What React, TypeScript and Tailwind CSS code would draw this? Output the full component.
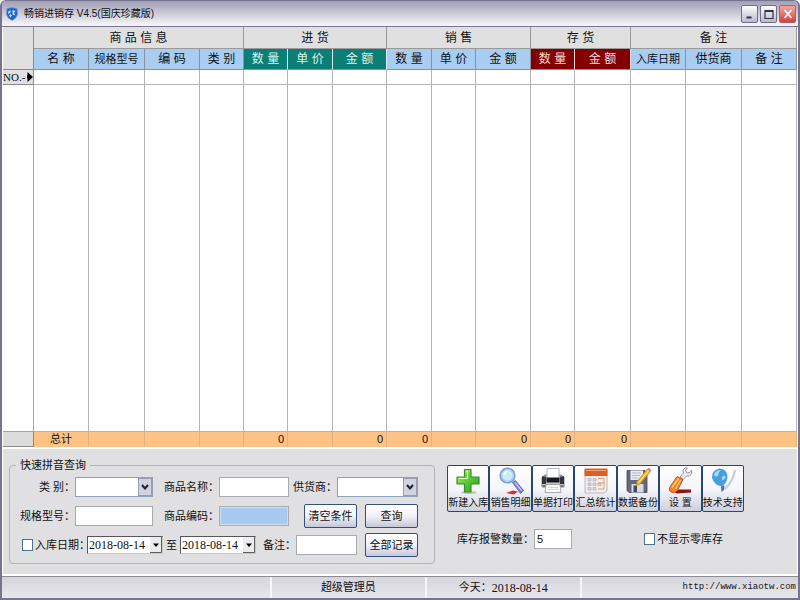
import React, { useState } from 'react';
import clsx from 'clsx';

const COLUMNS = [
  { label: '名 称', width: 55, tone: 'blue', total: '总计' },
  { label: '规格型号', width: 56, tone: 'blue', total: '' },
  { label: '编 码', width: 55, tone: 'blue', total: '' },
  { label: '类 别', width: 44, tone: 'blue', total: '' },
  { label: '数 量', width: 44, tone: 'teal', total: '0' },
  { label: '单 价', width: 45, tone: 'teal', total: '' },
  { label: '金 额', width: 54, tone: 'teal', total: '0' },
  { label: '数 量', width: 45, tone: 'blue', total: '0' },
  { label: '单 价', width: 44, tone: 'blue', total: '' },
  { label: '金 额', width: 55, tone: 'blue', total: '0' },
  { label: '数 量', width: 44, tone: 'red', total: '0' },
  { label: '金 额', width: 56, tone: 'red', total: '0' },
  { label: '入库日期', width: 55, tone: 'blue', total: '' },
  { label: '供货商', width: 56, tone: 'blue', total: '' },
  { label: '备 注', width: 55, tone: 'blue', total: '' },
];

const GROUPS = [
  { label: '商 品 信 息', span: 4 },
  { label: '进 货', span: 3 },
  { label: '销 售', span: 3 },
  { label: '存 货', span: 2 },
  { label: '备 注', span: 3 },
];

const TONES: Record<string, string> = {
  blue: 'bg-[#a9cdf1] text-[#111] border-[#8494a8]',
  teal: 'bg-[#0b7f76] text-[#d8f4f0] border-b-[#8494a8] border-r-[#dfeeee]',
  red: 'bg-[#840000] text-[#f4dcdc] border-b-[#8494a8] border-r-[#e8dcdc]',
};

const TABLE_WIDTH = 794;

const AppLogo = () => (
  <svg viewBox="0 0 12 14" className="h-3.5 w-3">
    <path d="M6 0.5 L11 1.5 L11.5 7 Q11 11 6 13.5 Q1 11 0.5 7 L1 1.5 Z" fill="#1d63c8" stroke="#5b9de8" strokeWidth="0.8" />
    <path d="M2.5 4 L5 3.5 L4 6 L2 7 Z M6.5 3 L9.5 4 L8 6 L9.5 8.5 L6.5 7.5 Z M4.5 7 L6 8.5 L4.5 10.5 L3 8.5 Z" fill="#bfe2ff" />
  </svg>
);

const AddIcon = () => (
  <svg viewBox="0 0 26 28" className="h-7 w-7">
    <defs>
      <linearGradient id="plus" x1="0" y1="0" x2="1" y2="1">
        <stop offset="0" stopColor="#b4ef72" />
        <stop offset="0.5" stopColor="#5cc83a" />
        <stop offset="1" stopColor="#2e9f1e" />
      </linearGradient>
    </defs>
    <ellipse cx="14" cy="25.5" rx="8" ry="1.5" fill="#b9c4b4" />
    <path d="M9.5 2.5 H16 V10 H24 V17 H16 V25 H9.5 V17 H2 V10 H9.5 Z" fill="url(#plus)" stroke="#339127" strokeWidth="1.2" strokeLinejoin="round" />
    <path d="M11 4 H12.5 V11.5 H4" fill="none" stroke="#dcfab8" strokeWidth="1" />
  </svg>
);

const SearchIcon = () => (
  <svg viewBox="0 0 26 28" className="h-7 w-7">
    <path d="M8 26 L15 23.5 L20 24.5 L16 27.5 Z" fill="#c83830" />
    <path d="M14.5 15.5 L17.5 13.5 L25.5 23.5 L22.5 26.5 Z" fill="#8184cf" stroke="#55569d" strokeWidth="0.8" />
    <path d="M17 15.5 L23.5 23.5" stroke="#c5c6f5" strokeWidth="1.2" />
    <circle cx="9.5" cy="8.5" r="7.3" fill="#cfeafb" stroke="#7f9dc4" strokeWidth="1.6" />
    <circle cx="9.5" cy="8.5" r="5.7" fill="none" stroke="#8fcdf2" strokeWidth="1" />
    <path d="M5 7 Q7 3 11 3.5 Q8 5 7 8 Z" fill="#fff" />
  </svg>
);

const PrintIcon = () => (
  <svg viewBox="0 0 26 28" className="h-7 w-7">
    <path d="M2 10 L5 8 H21 L24 10 V20 H2 Z" fill="#c3c6cd" stroke="#686b72" strokeWidth="0.8" />
    <path d="M2 9.5 H6 V17 H2 Z M20 9.5 H24 V17 H20 Z" fill="#33363c" />
    <path d="M7 1.5 H19 V12 H7 Z" fill="#fff" stroke="#a4a8b0" strokeWidth="0.8" />
    <path d="M6.5 10.5 H19.5 V15.5 H6.5 Z" fill="#191b1f" />
    <path d="M3 18 H23 V20 H3 Z" fill="#74777d" />
    <path d="M6 17.5 H20 L21 25.5 H5 Z" fill="#fafafa" stroke="#92959c" strokeWidth="0.8" />
    <path d="M8 20.5 H18 M8 22.5 H18" stroke="#c9cbd0" strokeWidth="0.8" />
  </svg>
);

const CalendarIcon = () => (
  <svg viewBox="0 0 26 28" className="h-7 w-7">
    <path d="M3 3 H25 V24 L22 26 H3 Z" fill="#f3ece9" stroke="#b3aaac" strokeWidth="0.8" />
    <path d="M2.5 1.5 H25.5 V9 H2.5 Z" fill="#dc5f26" />
    <path d="M4 3.5 H24" stroke="#f4a174" strokeWidth="1" />
    <path d="M6 11.5 H9 V14 H6 Z M11 11.5 H14 V14 H11 Z M6 16 H9 V18.5 H6 Z M11 16 H14 V18.5 H11 Z M16 16 H19 V18.5 H16 Z M6 20.5 H9 V23 H6 Z M11 20.5 H14 V23 H11 Z" fill="#dcd9e3" stroke="#a9a4bb" strokeWidth="0.6" />
    <path d="M16 11.5 H22 V22 H16 M16 16 H22" fill="none" stroke="#e89268" strokeWidth="0.9" />
  </svg>
);

const BackupIcon = () => (
  <svg viewBox="0 0 26 28" className="h-7 w-7">
    <path d="M2 3.5 H20 L22 5.5 V25.5 H4 L2 23.5 Z" fill="#65687d" stroke="#45485c" strokeWidth="0.8" />
    <path d="M5.5 3.5 H18 V13 H5.5 Z" fill="#eceef5" />
    <path d="M7 6 H16 M7 8.5 H15 M7 11 H13" stroke="#a7abbc" strokeWidth="0.9" />
    <path d="M6.5 17 H18.5 V25.5 H6.5 Z" fill="#d8dae4" />
    <path d="M8.5 18.5 H12 V25 H8.5 Z" fill="#45485c" />
    <path d="M12 14.5 L22.5 2 L25.5 4.5 L15 17 L11 18.5 Z" fill="#f1bd3b" stroke="#a97a1c" strokeWidth="0.7" />
    <path d="M22.5 2 L23.8 0.8 L26 3 L25.5 4.5 Z" fill="#e56c55" />
    <path d="M14 15 L23.5 3.8" stroke="#ffe899" strokeWidth="0.9" />
  </svg>
);

const SettingsIcon = () => (
  <svg viewBox="0 0 26 28" className="h-7 w-7">
    <path d="M7 25 L12 22.5 H24 V25.5 L10 26.5 Z" fill="#8b1712" />
    <path d="M13 10 L16.5 6 Q14.5 2.5 18 1 L20.5 0.8 L18.5 3.5 L20 6 L23 5.5 L24.5 3 Q26 7 22.5 9 L19.5 9 L16 12.5 Z" fill="#e9ebef" stroke="#8b8e98" strokeWidth="0.9" />
    <path d="M2.5 20.5 L10 9.5 L16 12.5 L11 22.5 Q8.5 26.5 5 25.5 Q1 24 2.5 20.5 Z" fill="#ee8726" stroke="#b75113" strokeWidth="0.9" />
    <path d="M5 20.5 L11.5 11.5 M8.5 22 L13.5 13" stroke="#ffc884" strokeWidth="1.3" />
  </svg>
);

const SupportIcon = () => (
  <svg viewBox="0 0 26 28" className="h-7 w-7">
    <path d="M25 3 Q23 14 15 22" fill="none" stroke="#c9ced8" strokeWidth="2.4" />
    <path d="M23 2 Q21.5 12 15 19" fill="none" stroke="#fff" strokeWidth="1.2" />
    <path d="M9.5 1.5 Q17.5 2 17.5 10 Q17 16 12 19.5 Q4 18 2 11 Q1.5 3 9.5 1.5 Z" fill="#459fe2" />
    <path d="M4 8 Q6 2.5 11 3.5 Q8 5 8.5 8 Q6 11 4 8 Z M12 10 Q14 7 16 10 Q14 14 12 13 Z" fill="#a6dcf9" />
    <path d="M11 19.5 L14.5 18.5 L14 23 L11.5 25 Z" fill="#3f73b4" />
  </svg>
);

const TOOLS = [
  { label: '新建入库', icon: AddIcon },
  { label: '销售明细', icon: SearchIcon },
  { label: '单据打印', icon: PrintIcon },
  { label: '汇总统计', icon: CalendarIcon },
  { label: '数据备份', icon: BackupIcon },
  { label: '设 置', icon: SettingsIcon },
  { label: '技术支持', icon: SupportIcon },
];

const inputClass = 'h-5 min-w-0 border border-[#a6abb0] bg-white px-0.5 outline-none';
const buttonClass =
  'h-6 w-[53px] shrink-0 rounded-xs border border-[#34507c] bg-linear-to-b from-white via-[#f2f2f8] to-[#c6c7d8] whitespace-nowrap';
const windowButtonClass = 'flex h-[18px] w-[17px] items-center justify-center rounded-xs border';

const TitleBar = () => (
  <header className="flex h-[26px] shrink-0 items-center gap-1.5 border-b border-[#77748f] bg-linear-to-b from-[#a09fb6] via-[#cccbd7] via-50% to-[#f8f8fb] pr-0.5 pl-1">
    <AppLogo />
    <h1 className="flex-1 text-[10px]">畅销进销存 V4.5(国庆珍藏版)</h1>
    <div className="flex gap-0.5">
      <button aria-label="最小化" className={clsx(windowButtonClass, 'border-[#6e6e8c] bg-linear-to-b from-white to-[#b9b9cf]')}>
        <svg viewBox="0 0 12 14" className="h-3.5 w-3"><path d="M2.5 10.5 H7.5" stroke="#30304a" strokeWidth="2.2" /></svg>
      </button>
      <button aria-label="最大化" className={clsx(windowButtonClass, 'border-[#6e6e8c] bg-linear-to-b from-white to-[#b9b9cf]')}>
        <svg viewBox="0 0 12 14" className="h-3.5 w-3"><path d="M2 3.5 H10 V11.5 H2 Z M2 4.5 H10" fill="none" stroke="#30304a" strokeWidth="1.2" /></svg>
      </button>
      <button aria-label="关闭" className={clsx(windowButtonClass, 'border-[#b06060] bg-linear-to-b from-[#f3a59e] to-[#cf3f3f]')}>
        <svg viewBox="0 0 12 14" className="h-3.5 w-3"><path d="M2.5 3 L9.5 11 M9.5 3 L2.5 11" stroke="#fff" strokeWidth="1.8" /></svg>
      </button>
    </div>
  </header>
);

const StockTable = () => (
  <table className="h-full w-full table-fixed border-separate border-spacing-0 bg-white text-[12px] leading-none">
    <colgroup>
      <col style={{ width: `${(31 / TABLE_WIDTH) * 100}%` }} />
      {COLUMNS.map((col, i) => (
        <col key={i} style={{ width: `${(col.width / TABLE_WIDTH) * 100}%` }} />
      ))}
    </colgroup>
    <thead>
      <tr className="h-[22px]">
        <th rowSpan={2} className="border-r border-b border-[#8a8a8a] bg-[#e0e0e1]" />
        {GROUPS.map((group, i) => (
          <th key={i} colSpan={group.span} className="border-r border-b border-[#9a9a9a] bg-[#e0e0e1] p-0 font-normal">
            {group.label}
          </th>
        ))}
      </tr>
      <tr className="h-[21px]">
        {COLUMNS.map((col, i) => (
          <th key={i} className={clsx('overflow-hidden border-r border-b p-0 font-normal whitespace-nowrap', col.label.length > 3 ? 'text-[11px]' : 'text-[12px]', TONES[col.tone])}>
            {col.label}
          </th>
        ))}
      </tr>
    </thead>
    <tbody>
      <tr className="h-[15px]">
        <th className="border-r border-b border-[#8a8a8a] bg-[#e0e0e1] p-0 font-normal">
          <span className="flex items-center justify-between font-['Liberation_Serif',serif] text-[11px] leading-3">
            NO.-
            <svg viewBox="0 0 6 10" className="h-2.5 w-1.5"><path d="M0.5 0 L6 5 L0.5 10 V6.5 H0 V3.5 H0.5 Z" fill="#000" /></svg>
          </span>
        </th>
        {COLUMNS.map((_, i) => (
          <td key={i} className="border-r border-b border-[#b4b4b4] p-0" />
        ))}
      </tr>
      <tr>
        <td className="border-r border-b border-[#a4a4a4] p-0" />
        {COLUMNS.map((_, i) => (
          <td key={i} className="border-r border-b border-[#b4b4b4] p-0" />
        ))}
      </tr>
    </tbody>
    <tfoot>
      <tr className="h-[15px]">
        <td className="border-r border-b border-[#8a8a8a] bg-[#dcdcdd] p-0" />
        {COLUMNS.map((col, i) => (
          <td key={i} className={clsx('border-r border-[#e4b27c] bg-[#fec384] p-0 text-[11px]', i === 0 ? 'text-center' : 'pr-[3px] text-right')}>
            {col.total}
          </td>
        ))}
      </tr>
    </tfoot>
  </table>
);

interface FieldProps {
  id: string;
  label: string;
  className?: string;
  children: React.ReactNode;
}

const Field: React.FC<FieldProps> = ({ id, label, className, children }) => (
  <div className={clsx('flex items-center', className)}>
    <label htmlFor={id} className="shrink-0 whitespace-nowrap">{label}</label>
    {children}
  </div>
);

const ComboBox = ({ id, className }: { id: string; className: string }) => (
  <span className={clsx('relative', className)}>
    <select id={id} className="block h-5 w-full appearance-none border border-[#8fa3b8] bg-white outline-none">
      <option value="" />
    </select>
    <svg viewBox="0 0 14 18" className="pointer-events-none absolute top-px right-px h-[18px] w-3.5">
      <rect x="0.5" y="0.5" width="13" height="17" fill="#d2d3e0" stroke="#9a9cb2" />
      <path d="M4 7 L7 10.5 L10 7" fill="none" stroke="#20202c" strokeWidth="2" />
    </svg>
  </span>
);

const DateBox = ({ id, label }: { id: string; label: string }) => {
  const [value, setValue] = useState('2018-08-14');
  return (
    <span className="relative w-[76px]">
      <input
        id={id}
        aria-label={label}
        value={value}
        onChange={(e) => setValue(e.target.value)}
        className="block h-[18px] w-full border border-t-[#55555a] border-r-[#c8c8c8] border-b-[#c8c8c8] border-l-[#55555a] bg-white pl-px font-['Liberation_Serif',serif] text-[12px] outline-none"
      />
      <svg viewBox="0 0 12 16" className="pointer-events-none absolute top-px right-px h-4 w-3">
        <path d="M0 0 H12 V16 H0 Z" fill="#ececec" />
        <path d="M0 15.5 H11.5 V0" fill="none" stroke="#606060" />
        <path d="M3 6.5 H9 L6 10 Z" fill="#000" />
      </svg>
    </span>
  );
};

const QueryForm = () => (
  <fieldset className="w-[426px] shrink-0 rounded-sm border border-[#b4b4b8] px-1.5 pt-1.5 pb-2">
    <legend className="px-1 leading-3">快速拼音查询</legend>
    <div className="flex flex-col gap-[9px]">
      <div className="flex h-5 items-center">
        <Field id="category" label="类 别：" className="w-[137px] justify-end">
          <ComboBox id="category" className="w-[78px]" />
        </Field>
        <Field id="name" label="商品名称：" className="ml-[11px] w-[125px]">
          <input id="name" className={clsx(inputClass, 'flex-1')} />
        </Field>
        <Field id="vendor" label="供货商：" className="ml-1 w-[125px]">
          <ComboBox id="vendor" className="flex-1" />
        </Field>
      </div>
      <div className="flex h-5 items-center">
        <Field id="model" label="规格型号：" className="w-[137px] justify-end">
          <input id="model" className={clsx(inputClass, 'w-[78px]')} />
        </Field>
        <Field id="code" label="商品编码：" className="ml-[11px] w-[125px]">
          <input id="code" className="h-5 min-w-0 flex-1 border border-[#a6abb0] bg-[#a6caf0] px-0.5 outline outline-1 -outline-offset-2 outline-[#d4dce6]" />
        </Field>
        <div className="ml-auto flex gap-2 pr-2.5">
          <button type="button" className={buttonClass}>清空条件</button>
          <button type="button" className={buttonClass}>查询</button>
        </div>
      </div>
      <div className="flex h-5 items-center">
        <input id="by-date" type="checkbox" className="ml-1.5 h-3 w-[11px] shrink-0 appearance-none border border-[#4f728c] bg-white checked:bg-[#4f728c]" />
        <label htmlFor="by-date" className="ml-0.5 w-[52px] whitespace-nowrap">入库日期：</label>
        <DateBox id="date-from" label="入库日期起" />
        <span className="mx-[3px]">至</span>
        <DateBox id="date-to" label="入库日期止" />
        <Field id="remark" label="备注：" className="ml-[7px]">
          <input id="remark" className={clsx(inputClass, 'w-[61px]')} />
        </Field>
        <button type="button" className={clsx(buttonClass, 'mr-2.5 ml-auto')}>全部记录</button>
      </div>
    </div>
  </fieldset>
);

const ToolPanel = () => (
  <div className="flex min-w-0 flex-1 flex-col gap-[17px] pt-1.5">
    <div className="flex max-w-[297px]">
      {TOOLS.map(({ label, icon: Icon }) => (
        <button
          key={label}
          type="button"
          className="flex h-[47px] min-w-0 flex-1 flex-col items-center justify-between rounded-xs border border-[#24486f] bg-linear-to-b from-white via-[#f6f6fb] to-[#cfd0df] pt-px pb-0.5 text-[10px] leading-3 whitespace-nowrap"
        >
          <Icon />
          <span>{label}</span>
        </button>
      ))}
    </div>
    <div className="flex items-center pl-2.5">
      <label htmlFor="alarm">库存报警数量：</label>
      <input id="alarm" defaultValue="5" className={clsx(inputClass, 'w-[38px]')} />
      <input id="hide-zero" type="checkbox" className="ml-[72px] h-3 w-[11px] appearance-none border border-[#4f728c] bg-white checked:bg-[#4f728c]" />
      <label htmlFor="hide-zero" className="ml-0.5">不显示零库存</label>
    </div>
  </div>
);

const StatusBar = () => (
  <footer className="flex h-[22px] shrink-0 items-center border-t border-[#8c8b94] bg-linear-to-b from-[#d6d5de] to-[#e6e6ea]">
    <div className="h-full flex-[270] border-r-2 border-[#f6f6f8]" />
    <div className="flex h-full flex-[154] items-center justify-center border-r-2 border-[#f6f6f8]">超级管理员</div>
    <div className="flex h-full flex-[154] items-center justify-center border-r-2 border-[#f6f6f8]">
      今天：<span className="font-['Liberation_Serif',serif] text-[12px]">2018-08-14</span>
    </div>
    <div className="flex h-full flex-[216] items-center justify-end pr-0.5">
      <a href="http://www.xiaotw.com" className="font-['Liberation_Mono',monospace] text-[9px]">http://www.xiaotw.com</a>
    </div>
  </footer>
);

export default function App() {
  return (
    <div className="flex h-screen flex-col overflow-hidden rounded-t-md border-x-2 border-t border-b-2 border-[#77748f] bg-[#e0e0e2] font-['Liberation_Sans','Noto_Sans_CJK_SC',sans-serif] text-[11px] text-[#111]">
      <TitleBar />
      <main className="flex min-h-0 flex-1 flex-col border-x border-white">
        <div className="min-h-0 flex-1">
          <StockTable />
        </div>
        <section className="flex shrink-0 gap-3 border-t-2 border-b-2 border-t-white border-b-white pt-2.5 pr-2 pb-2.5 pl-1.5">
          <QueryForm />
          <ToolPanel />
        </section>
      </main>
      <StatusBar />
    </div>
  );
}
